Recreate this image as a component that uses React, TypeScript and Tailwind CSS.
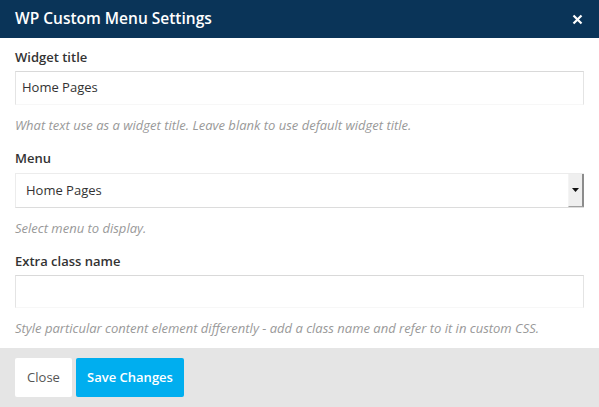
import React from "react";

type FieldProps = {
  label: string;
  help: string;
  children: React.ReactNode;
  className?: string;
};

function Field({ label, help, children, className = "" }: FieldProps) {
  return (
    <div className={className}>
      <label className="block text-[13px] font-semibold leading-[20px] text-[#333]">
        {label}
      </label>
      {children}
      <p className="mt-[12px] text-[13px] italic leading-[16px] text-[#999]">{help}</p>
    </div>
  );
}

function TextInput({ value, height }: { value: string; height: string }) {
  return (
    <div
      className={`mt-[4px] flex items-center border border-[#e4e4e4] border-t-[#d9d9d9] border-b-[#f7f7f7] bg-white px-[6px] text-[13px] text-[#333] ${height}`}
    >
      {value}
    </div>
  );
}

export default function App() {
  return (
    <div
      className="flex h-[407px] w-[599px] flex-col bg-white"
      style={{ fontFamily: '"Open Sans", "Noto Sans", sans-serif' }}
    >
      <div className="flex h-[38px] items-center justify-between bg-[#0a3458] pl-[15px] pr-[16px]">
        <h2 className="text-[15.5px] font-semibold text-white">WP Custom Menu Settings</h2>
        <svg width="11" height="11" viewBox="0 0 11 11" className="text-white">
          <path d="M1.5 1.5 L9.5 9.5 M9.5 1.5 L1.5 9.5" stroke="currentColor" strokeWidth="2.2" />
        </svg>
      </div>

      <div className="flex-1 px-[15px] pt-[9px]">
        <Field
          label="Widget title"
          help="What text use as a widget title. Leave blank to use default widget title."
        >
          <TextInput value="Home Pages" height="h-[34px]" />
        </Field>

        <Field label="Menu" help="Select menu to display." className="mt-[15px]">
          <div className="mt-[5px] flex h-[35px] border-t border-b border-l border-[#ececec] border-b-[#dcdcdc] bg-white">
            <span className="flex flex-1 items-center px-[10px] text-[13px] text-[#333]">
              Home Pages
            </span>
            <span className="flex w-[16px] items-center justify-center border-r-2 border-b border-l border-r-[#8c8c8c] border-b-[#a0a0a0] border-l-[#f4f4f4] bg-[#efefef]">
              <svg width="7" height="4" viewBox="0 0 7 4">
                <path d="M0 0 H7 L3.5 4 Z" fill="#111" />
              </svg>
            </span>
          </div>
        </Field>

        <Field
          label="Extra class name"
          help="Style particular content element differently - add a class name and refer to it in custom CSS."
          className="mt-[15px]"
        >
          <TextInput value="" height="h-[33px]" />
        </Field>
      </div>

      <div className="flex h-[59px] items-center gap-[4px] bg-[#e5e5e5] px-[15px]">
        <button className="h-[39px] w-[57px] rounded-[2px] bg-white text-[13px] text-[#555]">
          Close
        </button>
        <button className="h-[39px] w-[108px] rounded-[2px] bg-[#00aeef] text-[13px] font-semibold text-white">
          Save Changes
        </button>
      </div>
    </div>
  );
}
